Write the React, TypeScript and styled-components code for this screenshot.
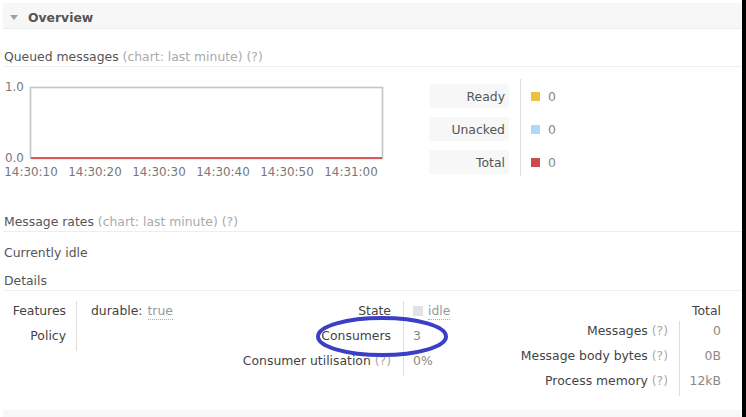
import React from "react";
import styled, { createGlobalStyle } from "styled-components";

const Global = createGlobalStyle`
  html, body { margin: 0; padding: 0; background: #fff; }
  body { font-family: "DejaVu Sans", Verdana, sans-serif; font-size: 12.4px; color: #484848; }
`;

const Page = styled.div`
  display: flex;
  width: 746px;
  height: 417px;
  overflow: hidden;
`;

const Main = styled.div`
  position: relative;
  flex: 1;
  display: flex;
  flex-direction: column;
  padding-left: 3px;
  padding-top: 3px;
  background: #fff;
`;

const Edge = styled.div`
  width: 4px;
  background: #000;
`;

const Header = styled.div`
  height: 26px;
  box-sizing: border-box;
  padding-top: 3px;
  display: flex;
  align-items: center;
  gap: 10px;
  padding-left: 7px;
  background: #f7f7f7;
  border-bottom: 1px solid #ececec;
  font-weight: bold;
  color: #555;
`;

const Triangle = styled.span`
  width: 0;
  height: 0;
  border-left: 4px solid transparent;
  border-right: 4px solid transparent;
  border-top: 5px solid #a0a0a0;
`;

const Heading = styled.div<{ $top: number }>`
  margin-top: ${(p) => p.$top}px;
  line-height: 16px;
  padding-left: 1px;
  padding-top: 1px;
  padding-bottom: 1px;
  border-bottom: 1px solid #eeeeee;
  color: #555;
`;

const Muted = styled.span`
  color: #aaa;
`;

const Plain = styled.div<{ $top: number }>`
  margin-top: ${(p) => p.$top}px;
  line-height: 16px;
  padding-left: 1px;
  color: #555;
`;

const ChartRow = styled.div`
  margin-top: 12px;
  height: 100px;
  display: flex;
  align-items: flex-start;
`;

const Legend = styled.div`
  margin-left: 26px;
  display: flex;
  align-items: flex-start;
`;

const LegendCol = styled.div`
  display: flex;
  flex-direction: column;
  gap: 9px;
  padding-top: 5px;
`;

const LegendLabel = styled.div`
  width: 80px;
  height: 24px;
  box-sizing: border-box;
  padding-right: 4px;
  padding-top: 1px;
  display: flex;
  align-items: center;
  justify-content: flex-end;
  background: #f7f7f7;
  border-radius: 3px;
  color: #555;
`;

const Divider = styled.div<{ $h: number }>`
  width: 1px;
  height: ${(p) => p.$h}px;
  margin-left: 11px;
  background: #dddddd;
`;

const LegendValue = styled.div`
  height: 24px;
  padding-left: 10px;
  padding-top: 1px;
  box-sizing: border-box;
  display: flex;
  align-items: center;
  gap: 8px;
  color: #888;
`;

const Swatch = styled.span<{ $c: string }>`
  width: 9px;
  height: 9px;
  background: ${(p) => p.$c};
`;

const DetailsRow = styled.div`
  margin-top: 10px;
  display: flex;
  align-items: flex-start;
`;

const Table = styled.div<{ $cols: string; $w?: number }>`
  display: grid;
  grid-template-columns: ${(p) => p.$cols};
  ${(p) => (p.$w ? `width: ${p.$w}px;` : "")}
`;

const Th = styled.div<{ $h?: number }>`
  height: ${(p) => p.$h ?? 25}px;
  box-sizing: border-box;
  padding-top: 2px;
  line-height: 16px;
  text-align: right;
  color: #444;
  white-space: nowrap;
`;

const LabelCell = styled(Th)<{ $pr: number }>`
  padding-right: ${(p) => p.$pr}px;
  border-right: 1px solid #dddddd;
`;

const ValueCell = styled.div<{ $pl?: number; $right?: boolean; $h?: number }>`
  height: ${(p) => p.$h ?? 25}px;
  box-sizing: border-box;
  padding-top: 2px;
  line-height: 16px;
  padding-left: ${(p) => p.$pl ?? 0}px;
  padding-right: ${(p) => (p.$right ? 5 : 0)}px;
  text-align: ${(p) => (p.$right ? "right" : "left")};
  color: #888;
  white-space: nowrap;
  display: flex;
  align-items: flex-start;
  justify-content: ${(p) => (p.$right ? "flex-end" : "flex-start")};
  gap: 5px;
`;

const Dark = styled.span`
  color: #444;
`;

const Dotted = styled.span`
  color: #999;
  border-bottom: 1px dotted #aaa;
`;

const StateBox = styled.span`
  width: 10px;
  height: 10px;
  margin-top: 3px;
  background: #e2e2e2;
`;

const Footer = styled.div`
  margin-top: auto;
  height: 7px;
  background: #f7f7f7;
`;

const Mark = styled.svg`
  position: absolute;
  left: 313px;
  top: 314px;
  pointer-events: none;
`;

const xLabels = ["14:30:10", "14:30:20", "14:30:30", "14:30:40", "14:30:50", "14:31:00"];

function Chart() {
  return (
    <svg width={400} height={100} style={{ display: "block", flex: "none" }}>
      <g fontFamily="DejaVu Sans, Verdana, sans-serif" fontSize="11.9" fill="#777">
        <text x={2} y={12}>1.0</text>
        <text x={2} y={83}>0.0</text>
        {xLabels.map((l, i) => (
          <text key={l} x={28 + i * 64} y={97} textAnchor="middle">
            {l}
          </text>
        ))}
      </g>
      <rect x={27.5} y={8.5} width={352} height={71} fill="#fff" stroke="#c4c4c4" strokeWidth={1.6} />
      <line x1={28} y1={79} x2={379} y2={79} stroke="#d65a5a" strokeWidth={2.2} />
    </svg>
  );
}

export default function App() {
  return (
    <>
      <Global />
      <Page>
        <Main>
          <Header>
            <Triangle />
            Overview
          </Header>
          <Heading $top={19}>
            Queued messages <Muted>(chart: last minute) (?)</Muted>
          </Heading>
          <ChartRow>
            <Chart />
            <Legend>
              <LegendCol>
                <LegendLabel>Ready</LegendLabel>
                <LegendLabel>Unacked</LegendLabel>
                <LegendLabel>Total</LegendLabel>
              </LegendCol>
              <Divider $h={97} />
              <LegendCol>
                <LegendValue>
                  <Swatch $c="#edc240" />0
                </LegendValue>
                <LegendValue>
                  <Swatch $c="#afd8f8" />0
                </LegendValue>
                <LegendValue>
                  <Swatch $c="#cb4b4b" />0
                </LegendValue>
              </LegendCol>
            </Legend>
          </ChartRow>
          <Heading $top={34}>
            Message rates <Muted>(chart: last minute) (?)</Muted>
          </Heading>
          <Plain $top={13}>Currently idle</Plain>
          <Heading $top={11}>Details</Heading>
          <DetailsRow>
            <Table $cols="74px 1fr" $w={237}>
              <LabelCell $pr={10}>Features</LabelCell>
              <ValueCell $pl={14}>
                <Dark>durable:</Dark>
                <Dotted>true</Dotted>
              </ValueCell>
              <LabelCell $pr={10}>Policy</LabelCell>
              <ValueCell $pl={14} />
            </Table>
            <Table $cols="164px 1fr" $w={200}>
              <LabelCell $pr={12}>State</LabelCell>
              <ValueCell $pl={9}>
                <StateBox />
                <Dotted>idle</Dotted>
              </ValueCell>
              <LabelCell $pr={12}>Consumers</LabelCell>
              <ValueCell $pl={9}>3</ValueCell>
              <LabelCell $pr={12}>
                Consumer utilisation <Muted>(?)</Muted>
              </LabelCell>
              <ValueCell $pl={9}>0%</ValueCell>
            </Table>
            <Table $cols="179px 46px" style={{ marginLeft: "auto", marginRight: 16 }}>
              <Th $h={20} />
              <ValueCell $right $h={20}>
                <Dark>Total</Dark>
              </ValueCell>
              <LabelCell $pr={11}>
                Messages <Muted>(?)</Muted>
              </LabelCell>
              <ValueCell $right>0</ValueCell>
              <LabelCell $pr={11}>
                Message body bytes <Muted>(?)</Muted>
              </LabelCell>
              <ValueCell $right>0B</ValueCell>
              <LabelCell $pr={11}>
                Process memory <Muted>(?)</Muted>
              </LabelCell>
              <ValueCell $right>12kB</ValueCell>
            </Table>
          </DetailsRow>
          <Footer />
          <Mark width={140} height={46}>
            <ellipse cx={69} cy={22.5} rx={64} ry={18.5} fill="none" stroke="#3a3fc6" strokeWidth={4} />
          </Mark>
        </Main>
        <Edge />
      </Page>
    </>
  );
}
